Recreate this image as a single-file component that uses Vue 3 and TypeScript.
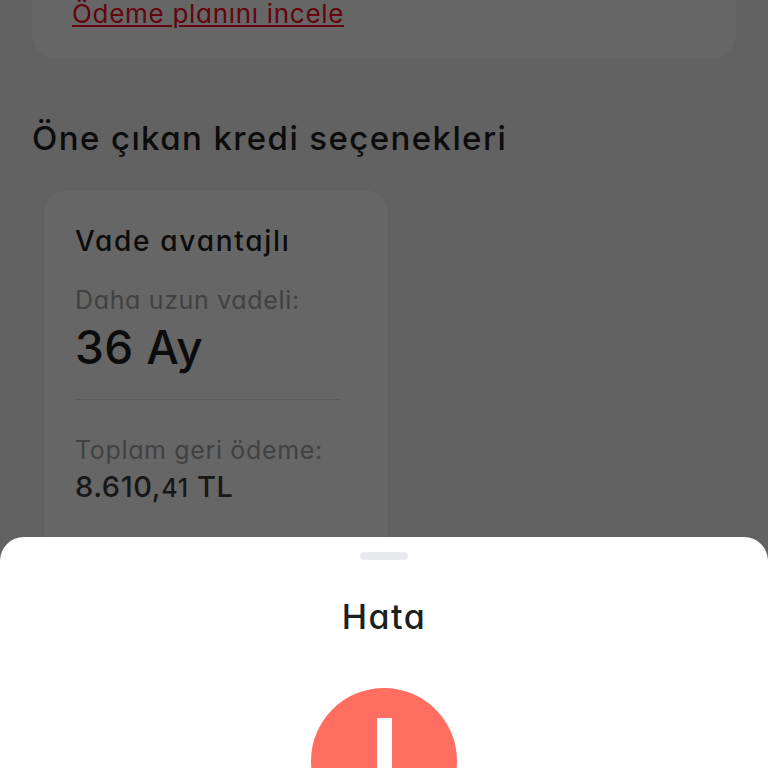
<script setup lang="ts">
const title = 'Öne çıkan kredi seçenekleri'
</script>

<template>
  <div class="screen">
    <main class="page">
      <section class="plan">
        <a class="link">Ödeme planını incele</a>
      </section>
      <h2 class="heading">{{ title }}</h2>
      <article class="offer">
        <h3 class="offer-title">Vade avantajlı</h3>
        <p class="label first">Daha uzun vadeli:</p>
        <p class="big">36 Ay</p>
        <hr class="rule" />
        <p class="label second">Toplam geri ödeme:</p>
        <p class="amount">8.610,<span class="cents">41</span> TL</p>
      </article>
    </main>
    <div class="scrim"></div>
    <aside class="sheet">
      <div class="handle"></div>
      <h1 class="sheet-title">Hata</h1>
      <div class="badge"><div class="bar"></div></div>
    </aside>
  </div>
</template>

<style>
html, body { margin: 0; background: #5f5f5f; }
</style>

<style scoped>
.screen {
  position: relative;
  width: 768px;
  height: 768px;
  overflow: hidden;
  background: #f5f5f5;
  font-family: Inter, Lato, sans-serif;
  font-feature-settings: "cv11" 1;
}
.page {
  display: flex;
  flex-direction: column;
  align-items: flex-start;
  margin-top: -40px;
  padding: 0 32px;
}
.plan {
  box-sizing: border-box;
  width: 704px;
  height: 98px;
  padding: 37px 40px 0;
  background: #ffffff;
  border-radius: 0 0 24px 24px;
}
.link {
  font-size: 26px;
  line-height: 34px;
  letter-spacing: 0.7px;
  color: #fa0a1e;
  text-decoration: underline;
  text-underline-offset: 2px;
  text-decoration-thickness: 2px;
}
.heading {
  margin: 57px 0 0;
  font-size: 33px;
  line-height: 46px;
  font-weight: 500;
  letter-spacing: 1.4px;
  color: #1f1f1f;
}
.offer {
  box-sizing: border-box;
  width: 346px;
  height: 420px;
  margin: 28px 0 0 11px;
  padding: 32px 31px 0;
  background: #ffffff;
  border: 1px solid #eeeeee;
  border-radius: 24px;
}
.offer-title {
  margin: 0;
  font-size: 28px;
  line-height: 38px;
  font-weight: 500;
  letter-spacing: 1.7px;
  color: #1f1f1f;
}
.label {
  margin: 0;
  font-size: 25px;
  line-height: 34px;
  letter-spacing: 0.65px;
  color: #a4a4a4;
}
.first { margin-top: 23px; }
.big {
  margin: 2px 0 0;
  font-size: 46px;
  line-height: 56px;
  font-weight: 500;
  letter-spacing: 0.4px;
  color: #1f1f1f;
}
.rule {
  margin: 24px 0 0;
  width: 265px;
  border: 0;
  border-top: 1px solid #e2e2e2;
}
.second { margin-top: 33px; }
.amount {
  margin: 2px 0 0;
  font-size: 29px;
  line-height: 36px;
  font-weight: 500;
  letter-spacing: 0.6px;
  color: #3c3c3c;
}
.cents { font-size: 25px; }
.scrim {
  position: absolute;
  inset: 0;
  background: rgba(0, 0, 0, 0.6);
}
.sheet {
  position: absolute;
  left: 0;
  right: 0;
  top: 537px;
  bottom: 0;
  display: flex;
  flex-direction: column;
  align-items: center;
  background: #ffffff;
  border-radius: 24px 24px 0 0;
}
.handle {
  flex: none;
  width: 48px;
  height: 8px;
  margin-top: 15px;
  border-radius: 4px;
  background: #e8e9ec;
}
.sheet-title {
  flex: none;
  margin: 35px 0 0;
  font-size: 34px;
  line-height: 44px;
  font-weight: 500;
  letter-spacing: 1.5px;
  color: #1f1f1f;
}
.badge {
  flex: none;
  display: flex;
  justify-content: center;
  width: 146px;
  height: 146px;
  margin-top: 49px;
  border-radius: 50%;
  background: #ff6e61;
}
.bar {
  width: 15px;
  height: 70px;
  margin-top: 30px;
  background: #ffffff;
}
</style>
